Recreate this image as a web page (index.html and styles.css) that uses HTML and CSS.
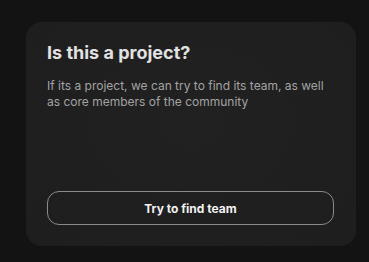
FILE: index.html
```html
<!DOCTYPE html>
<html lang="en">
<head>
    <meta charset="UTF-8">
    <meta name="viewport" content="width=device-width, initial-scale=1.0">
    <title>Is this a project?</title>
    <link rel="stylesheet" href="styles.css">
</head>
<body>
    <div class="project-card">
        <!-- heading -->
        <h2 class="project-title">Is this a project?</h2>
        <p class="project-desc">If its a project, we can try to find its team, as well as core members of the community</p>

        <!-- action -->
        <button type="button" class="btn-find">Try to find team</button>
    </div>
</body>
</html>
```

FILE: styles.css
```css
* {
    margin: 0;
    padding: 0;
    box-sizing: border-box;
}
body {
    font-family: 'Inter', 'Noto Sans', sans-serif;
    background-color: #131313;
    padding: 22px 13px 0 26px;
    min-height: 100vh;
}
.project-card {
    width: 330px;
    height: 224px;
    background: radial-gradient(ellipse at 50% 45%, #212121 0%, #1f1f1f 60%, #1e1e1e 100%);
    border-radius: 16px;
    padding: 20px 22px 21px 21px;
    display: flex;
    flex-direction: column;
}
.project-title {
    font-size: 18px;
    font-weight: 700;
    line-height: 22px;
    color: #e2e2e2;
}
.project-desc {
    margin-top: 14px;
    font-size: 12px;
    line-height: 16px;
    color: #a3a3a3;
}
.btn-find {
    margin-top: auto;
    width: 100%;
    height: 34px;
    background: transparent;
    border: 1px solid #8a8a8a;
    border-radius: 12px;
    font-family: inherit;
    font-size: 12px;
    font-weight: 700;
    color: #f2f2f2;
    cursor: pointer;
}
```
